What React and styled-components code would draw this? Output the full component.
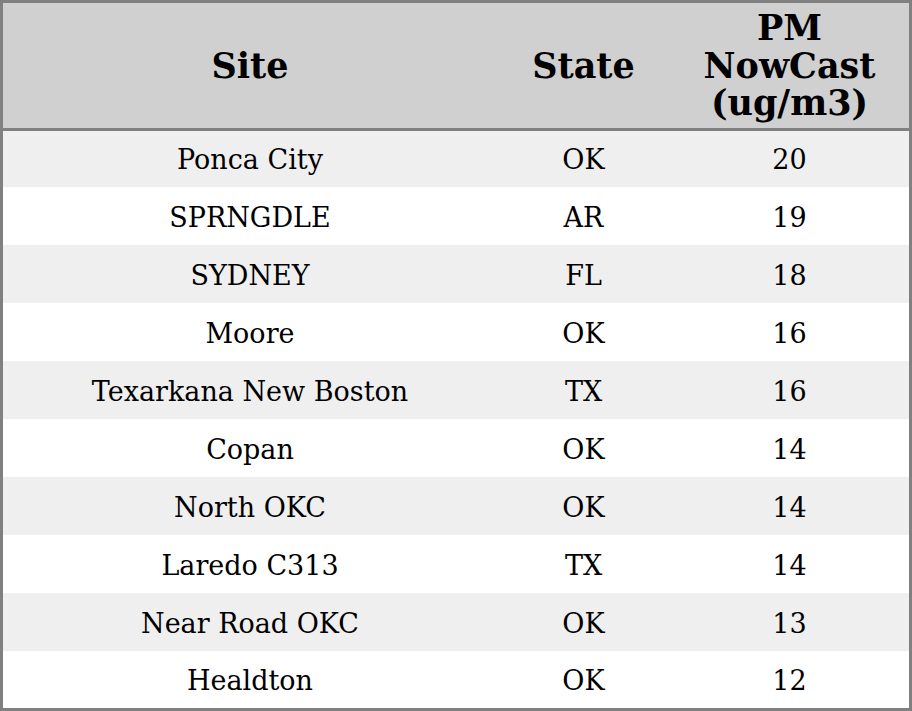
import React from "react";
import styled, { createGlobalStyle } from "styled-components";

const GlobalStyle = createGlobalStyle`
  html, body {
    margin: 0;
    padding: 0;
    background: #ffffff;
  }
  body {
    font-family: "DejaVu Serif", "Liberation Serif", serif;
    color: #000;
  }
`;

const rows = [
  { site: "Ponca City", state: "OK", pm: 20 },
  { site: "SPRNGDLE", state: "AR", pm: 19 },
  { site: "SYDNEY", state: "FL", pm: 18 },
  { site: "Moore", state: "OK", pm: 16 },
  { site: "Texarkana New Boston", state: "TX", pm: 16 },
  { site: "Copan", state: "OK", pm: 14 },
  { site: "North OKC", state: "OK", pm: 14 },
  { site: "Laredo C313", state: "TX", pm: 14 },
  { site: "Near Road OKC", state: "OK", pm: 13 },
  { site: "Healdton", state: "OK", pm: 12 },
];

const Table = styled.div`
  box-sizing: border-box;
  width: 912px;
  height: 711px;
  border: 3px solid #808080;
  display: grid;
  grid-template-rows: 128px 56px repeat(8, 58px) 1fr;
`;

const HeaderRow = styled.div`
  display: grid;
  grid-template-columns: 494px 173px 1fr;
  background: #d0d0d0;
  border-bottom: 3px solid #808080;
`;

const HeadCell = styled.div`
  display: flex;
  align-items: center;
  justify-content: center;
  text-align: center;
  font-size: 35px;
  font-weight: 700;
  line-height: 37.5px;
`;

const Row = styled.div`
  display: grid;
  grid-template-columns: 494px 173px 1fr;
  background: ${(p) => (p.$striped ? "#efefef" : "#ffffff")};
`;

const Cell = styled.div`
  display: flex;
  align-items: center;
  justify-content: center;
  font-size: 27px;
  padding-top: ${(p) => (p.$first ? "0" : "2px")};
`;

export default function App() {
  return (
    <>
      <GlobalStyle />
      <Table>
        <HeaderRow>
          <HeadCell>Site</HeadCell>
          <HeadCell>State</HeadCell>
          <HeadCell>
            PM
            <br />
            NowCast
            <br />
            (ug/m3)
          </HeadCell>
        </HeaderRow>
        {rows.map((r, i) => (
          <Row key={r.site} $striped={i % 2 === 0}>
            <Cell $first={i === 0}>{r.site}</Cell>
            <Cell $first={i === 0}>{r.state}</Cell>
            <Cell $first={i === 0}>{r.pm}</Cell>
          </Row>
        ))}
      </Table>
    </>
  );
}
